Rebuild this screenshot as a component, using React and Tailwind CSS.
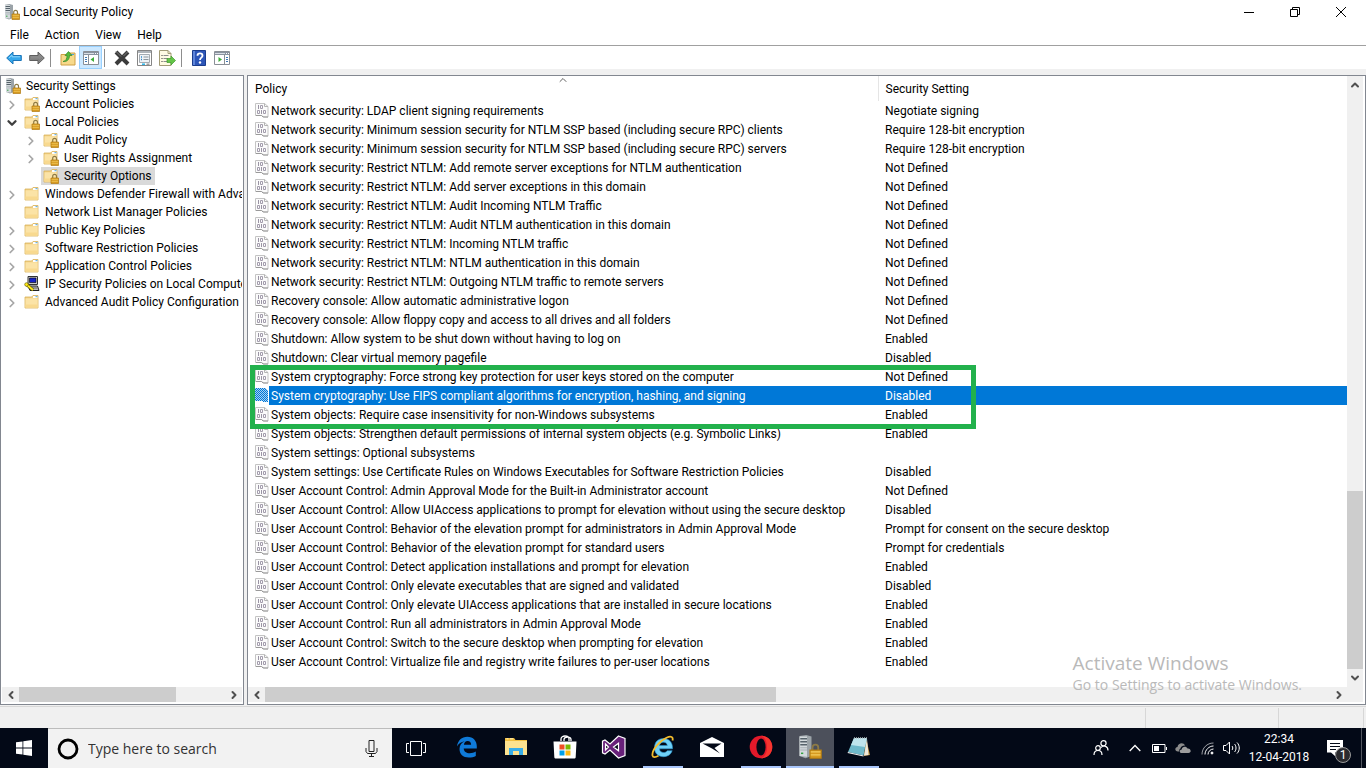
import React, { useState } from 'react'
import { ChevronDown, ChevronLeft, ChevronRight, ChevronUp } from 'lucide-react'
import clsx from 'clsx'

const menus = ['File', 'Action', 'View', 'Help']

const tree = [
  { label: 'Security Settings', level: 0, icon: 'server' },
  { label: 'Account Policies', level: 1, icon: 'locked', arrow: 'closed' },
  { label: 'Local Policies', level: 1, icon: 'locked', arrow: 'open' },
  { label: 'Audit Policy', level: 2, icon: 'locked', arrow: 'closed' },
  { label: 'User Rights Assignment', level: 2, icon: 'locked', arrow: 'closed' },
  { label: 'Security Options', level: 2, icon: 'locked' },
  { label: 'Windows Defender Firewall with Adva', level: 1, icon: 'folder', arrow: 'closed' },
  { label: 'Network List Manager Policies', level: 1, icon: 'folder' },
  { label: 'Public Key Policies', level: 1, icon: 'folder', arrow: 'closed' },
  { label: 'Software Restriction Policies', level: 1, icon: 'folder', arrow: 'closed' },
  { label: 'Application Control Policies', level: 1, icon: 'folder', arrow: 'closed' },
  { label: 'IP Security Policies on Local Compute', level: 1, icon: 'ipsec', arrow: 'closed' },
  { label: 'Advanced Audit Policy Configuration', level: 1, icon: 'folder', arrow: 'closed' },
]

const policies = [
  ['Network security: LDAP client signing requirements', 'Negotiate signing'],
  ['Network security: Minimum session security for NTLM SSP based (including secure RPC) clients', 'Require 128-bit encryption'],
  ['Network security: Minimum session security for NTLM SSP based (including secure RPC) servers', 'Require 128-bit encryption'],
  ['Network security: Restrict NTLM: Add remote server exceptions for NTLM authentication', 'Not Defined'],
  ['Network security: Restrict NTLM: Add server exceptions in this domain', 'Not Defined'],
  ['Network security: Restrict NTLM: Audit Incoming NTLM Traffic', 'Not Defined'],
  ['Network security: Restrict NTLM: Audit NTLM authentication in this domain', 'Not Defined'],
  ['Network security: Restrict NTLM: Incoming NTLM traffic', 'Not Defined'],
  ['Network security: Restrict NTLM: NTLM authentication in this domain', 'Not Defined'],
  ['Network security: Restrict NTLM: Outgoing NTLM traffic to remote servers', 'Not Defined'],
  ['Recovery console: Allow automatic administrative logon', 'Not Defined'],
  ['Recovery console: Allow floppy copy and access to all drives and all folders', 'Not Defined'],
  ['Shutdown: Allow system to be shut down without having to log on', 'Enabled'],
  ['Shutdown: Clear virtual memory pagefile', 'Disabled'],
  ['System cryptography: Force strong key protection for user keys stored on the computer', 'Not Defined'],
  ['System cryptography: Use FIPS compliant algorithms for encryption, hashing, and signing', 'Disabled'],
  ['System objects: Require case insensitivity for non-Windows subsystems', 'Enabled'],
  ['System objects: Strengthen default permissions of internal system objects (e.g. Symbolic Links)', 'Enabled'],
  ['System settings: Optional subsystems', ''],
  ['System settings: Use Certificate Rules on Windows Executables for Software Restriction Policies', 'Disabled'],
  ['User Account Control: Admin Approval Mode for the Built-in Administrator account', 'Not Defined'],
  ['User Account Control: Allow UIAccess applications to prompt for elevation without using the secure desktop', 'Disabled'],
  ['User Account Control: Behavior of the elevation prompt for administrators in Admin Approval Mode', 'Prompt for consent on the secure desktop'],
  ['User Account Control: Behavior of the elevation prompt for standard users', 'Prompt for credentials'],
  ['User Account Control: Detect application installations and prompt for elevation', 'Enabled'],
  ['User Account Control: Only elevate executables that are signed and validated', 'Disabled'],
  ['User Account Control: Only elevate UIAccess applications that are installed in secure locations', 'Enabled'],
  ['User Account Control: Run all administrators in Admin Approval Mode', 'Enabled'],
  ['User Account Control: Switch to the secure desktop when prompting for elevation', 'Enabled'],
  ['User Account Control: Virtualize file and registry write failures to per-user locations', 'Enabled'],
]

function Lock() {
  return (
    <g>
      <path d="M9.700 10.500V8.300a1.900 1.900 0 0 1 3.800 0v2.200" fill="none" stroke="#8d7a45" strokeWidth="1.200" />
      <path d="M8 10h7.500v5.500H8z" fill="#d79a20" stroke="#b07a12" strokeWidth=".7" />
      <path d="M8.500 11.300h6.500M8.500 13.300h6.500" stroke="#f3cb5e" strokeWidth=".8" />
    </g>
  )
}

function ServerIcon({ size = 16 }) {
  return (
    <svg width={size} height={size} viewBox="0 0 16 16">
      <path d="M1 .7 5.500 0 9 1v13l-4 1.500L1 14z" fill="#9ba3a8" />
      <path d="M1 1h5v13.500L1 14z" fill="#d3d9dc" />
      <path d="M1.500 2.500H6M1.500 4.500H6M1.500 6.500H6" stroke="#56626a" strokeWidth="1" />
      <path d="M1.500 8.500H6M1.500 10H6" stroke="#a8b0b5" strokeWidth=".7" />
      <path d="M2 12.200h1.500" stroke="#35a343" />
      <Lock />
    </svg>
  )
}

function FolderIcon({ locked }) {
  return (
    <svg width="16" height="16" viewBox="0 0 16 16">
      <path d="M1 3h6.500l1.500-1.500h5V14H1z" fill="#f0cf83" stroke="#d9b25c" strokeWidth=".8" />
      <path d="M9 2h4.500v2H9z" fill="#fff" />
      <path d="M11.500 2.700h2" stroke="#4aa3e0" />
      <path d="M1.500 4.300h12.200v9.300H1.500z" fill="#fbe3a6" />
      <path d="M1.500 10.500h12.200v3.100H1.500z" fill="#f8d98f" />
      {locked && <Lock />}
    </svg>
  )
}

function IpsecIcon() {
  return (
    <svg width="16" height="16" viewBox="0 0 16 16">
      <path d="M4 .5h9.500v8H4z" fill="#c9c9c9" stroke="#333" />
      <path d="M5.500 2h6.500v4.500H5.500z" fill="#1522c9" stroke="#000" strokeWidth=".6" />
      <path d="M4 10h9.500l1.500 4.500H6z" fill="#bdbdbd" stroke="#222" />
      <path d="M7 12h6.500" stroke="#666" />
      <path d="m2 8 7 6" stroke="#5f5600" strokeWidth="3" />
      <path d="m2 8 7 6" stroke="#ffeb1c" strokeWidth="1.800" />
      <circle cx="2.500" cy="8.500" r="1.800" fill="#ffeb1c" stroke="#5f5600" strokeWidth=".6" />
    </svg>
  )
}

function PolicyIcon({ selected }) {
  return (
    <svg width="14" height="15" viewBox="0 0 14 15" className="block">
      {selected ? (
        <>
          <defs>
            <pattern id="dither" width="2" height="2" patternUnits="userSpaceOnUse">
              <rect width="2" height="2" fill="#0078d7" />
              <rect width="1" height="1" fill="#a9d0f2" />
              <rect x="1" y="1" width="1" height="1" fill="#a9d0f2" />
            </pattern>
          </defs>
          <path d="M0 0h10l3 3v11H9l-3-1H0z" fill="url(#dither)" shapeRendering="crispEdges" />
        </>
      ) : (
        <>
          <path d="M.5.500h9l3.500 3v10.500H9L6.500 12.500H.5z" fill="#fbfbfb" stroke="#c4c4c4" />
          <path d="M9.500.500v3H13" fill="none" stroke="#b4b4b4" />
          <path d="M1 12.500h5.500L8 14h5" fill="none" stroke="#999" />
          <path d="M3.500 2v4M6.500 7v4" stroke="#9a94a4" />
          <path d="M5.500 2.500h2v3h-2zM2.500 7.500h2v3h-2zM8.500 7.500h2v3h-2z" fill="none" stroke="#a39dad" />
        </>
      )}
    </svg>
  )
}

function TreeIcon({ name }) {
  if (name === 'server') return <ServerIcon />
  if (name === 'ipsec') return <IpsecIcon />
  return <FolderIcon locked={name === 'locked'} />
}

function ArrowIcon({ forward }) {
  return (
    <svg width="16" height="14" viewBox="0 0 16 14" className={forward ? 'rotate-180' : ''}>
      <path
        d="M.7 7 7 1v3.500h8.300v5H7V13z"
        fill={forward ? '#8a8a8a' : '#35a7ea'}
        stroke={forward ? '#5e5e5e' : '#1b74b8'}
        strokeLinejoin="round"
      />
      <path d="M3 7 6 4.200v1.600h8" fill="none" stroke={forward ? '#7b7b7b' : '#8fd6fb'} />
    </svg>
  )
}

function PaneIcon({ flip }) {
  return (
    <svg width="16" height="14" viewBox="0 0 16 14">
      <path d="M.5.500h15v13H.5z" fill="#fff" stroke="#8a8f96" />
      <path d="M1 1h14v3H1z" fill="#8a93a0" />
      <path d="M1 2.500h10" stroke="#d9dee4" />
      <path d="M12 2.500h1M14 2.500h1" stroke="#fff" />
      <path d={flip ? 'M10.500 4v9' : 'M5.500 4v9'} stroke="#8a8f96" />
      <path d={flip ? 'M12 6.500h2M12 8.500h2M12 10.500h2' : 'M2 6.500h2M2 8.500h2M2 10.500h2'} stroke="#3f78b5" />
      <path d={flip ? 'M4.500 6v5L8 8.500z' : 'M11 6v5L7.500 8.500z'} fill="#3fae3a" />
    </svg>
  )
}

function FolderUpIcon() {
  return (
    <svg width="16" height="16" viewBox="0 0 16 16">
      <path d="M1 4.500h7l1-1.500h6v12H1z" fill="#f7d98b" stroke="#cfa044" />
      <path d="M11 4.500h3" stroke="#4aa3e0" />
      <path d="M3 11.500c3-.5 4-3 4-6H5L8.500 1.500 12 5.500H9.500c0 4-2.500 6.500-6.500 6z" fill="#55bb3c" stroke="#34862a" strokeWidth=".7" />
    </svg>
  )
}

function DeleteIcon() {
  return (
    <svg width="16" height="16" viewBox="0 0 16 16">
      <path d="m2 2 12 12M14 2 2 14" stroke="#3c3c3c" strokeWidth="4" />
      <path d="m2 1.500 5 5M13.500 2l-4 4" stroke="#7a7a7a" strokeWidth="1" />
    </svg>
  )
}

function PropertiesIcon() {
  return (
    <svg width="16" height="16" viewBox="0 0 16 16">
      <path d="M.5.500h14v15H.5z" fill="#fff" stroke="#858585" />
      <path d="M1 2h13" stroke="#aeb4ba" strokeWidth="2" />
      <path d="M2.500 4.500h10v8h-10z" fill="#eef3f7" stroke="#a4abb2" />
      <path d="M4 7h1M4 9.500h1" stroke="#2d87c9" strokeWidth="1.500" />
      <path d="M6.500 7h5M6.500 9.500h5" stroke="#8b949c" />
      <path d="M5 14.200h3" stroke="#2bb4e8" strokeWidth="1.500" />
      <path d="M9.500 14.200h3" stroke="#999" strokeWidth="1.500" />
    </svg>
  )
}

function ExportIcon() {
  return (
    <svg width="17" height="16" viewBox="0 0 17 16">
      <path d="M.5.500h8.500l3 3v12H.5z" fill="#fffbe3" stroke="#a39c77" />
      <path d="M9 .5v3h3" fill="none" stroke="#a39c77" />
      <path d="M2.500 5.500h1M2.500 8.500h1M2.500 11.500h1" stroke="#333" />
      <path d="M4.500 5.500h5M4.500 8.500h4M4.500 11.500h4" stroke="#8c8c8c" />
      <path d="M8 8.500h4V6l4.500 4.500L12 15v-2.500H8z" fill="#64c548" stroke="#3d9a2b" strokeWidth=".7" />
    </svg>
  )
}

function HelpIcon() {
  return (
    <svg width="14" height="16" viewBox="0 0 14 16">
      <path d="M.5.500h13v15H.5z" fill="#2d56b8" stroke="#1b3c8c" />
      <path d="M1 1h2v14H1z" fill="#5f86da" />
      <path d="M5.500 5.700c0-3 5-3 5 0 0 2-2.500 2-2.500 4.300" fill="none" stroke="#fff" strokeWidth="1.800" />
      <circle cx="8" cy="12.500" r="1.200" fill="#fff" />
    </svg>
  )
}

function ToolButton({ label, active, children }) {
  return (
    <button
      type="button"
      aria-label={label}
      className={clsx(
        'flex h-[23px] w-[23px] items-center justify-center border',
        active ? 'border-[#99d1ff] bg-[#cce8ff]' : 'border-transparent hover:bg-[#e5f3ff]',
      )}
    >
      {children}
    </button>
  )
}

function ToolSeparator() {
  return <div className="mr-[5px] ml-0.5 h-[18px] w-px bg-[#8d8d8d]" />
}

function ScrollButton({ label, icon: Icon, className }) {
  return (
    <button type="button" aria-label={label} className={clsx('flex shrink-0 items-center justify-center text-[#505050]', className)}>
      <Icon size={12} strokeWidth={4} />
    </button>
  )
}

function HorizontalScrollbar({ thumb }) {
  return (
    <div className="flex h-[15px] bg-[#f0f0f0]">
      <ScrollButton label="Scroll left" icon={ChevronLeft} className="w-[17px]" />
      <div className="flex-1">
        <div className={clsx('h-full bg-[#cdcdcd]', thumb)} />
      </div>
      <ScrollButton label="Scroll right" icon={ChevronRight} className="w-[17px]" />
    </div>
  )
}

function Tree() {
  const [selected, setSelected] = useState('Security Options')

  return (
    <nav className="flex w-[244px] shrink-0 flex-col border border-[#828790] bg-white px-px pt-px pb-0.5">
      <ul className="flex-1 overflow-hidden">
        {tree.map((node) => (
          <li
            key={node.label}
            className={clsx(
              'flex h-[18px] items-center',
              node.level === 0 && 'pl-px',
              node.level === 1 && 'pl-0.5',
              node.level === 2 && 'pl-[21px]',
            )}
          >
            {node.level > 0 && (
              <span className="mr-0.5 flex w-4 shrink-0 justify-center pt-0.5">
                {node.arrow === 'closed' && <ChevronRight size={14} strokeWidth={3} className="text-[#a6a6a6]" />}
                {node.arrow === 'open' && <ChevronDown size={14} strokeWidth={4} className="text-[#404040]" />}
              </span>
            )}
            <button
              type="button"
              onClick={() => setSelected(node.label)}
              className={clsx(
                'flex h-[18px] items-center gap-[5px] pr-1 pl-0.5 whitespace-nowrap',
                selected === node.label && 'bg-[#d9d9d9]',
              )}
            >
              <TreeIcon name={node.icon} />
              {node.label}
            </button>
          </li>
        ))}
      </ul>
      <HorizontalScrollbar thumb="w-[76%]" />
    </nav>
  )
}

function PolicyList() {
  const [selected, setSelected] = useState(15)

  return (
    <main className="flex min-w-0 flex-1 flex-col border border-[#828790] bg-white pr-0.5 pb-0.5">
      <div className="flex flex-1">
        <div className="relative min-w-0 flex-1">
          <table className="w-full table-fixed border-collapse text-left">
            <colgroup>
              <col className="w-[21px]" />
              <col className="w-[609px]" />
              <col />
            </colgroup>
            <thead>
              <tr className="h-[25px]">
                <th colSpan={2} className="relative border-r border-[#e5e5e5] p-0 pl-[7px] font-normal">
                  Policy
                  <span className="absolute inset-x-0 -top-0.5 flex justify-center text-[#606060]">
                    <ChevronUp size={12} strokeWidth={2} />
                  </span>
                </th>
                <th className="p-0 pl-[7px] font-normal">Security Setting</th>
              </tr>
            </thead>
            <tbody>
              {policies.map(([name, setting], i) => (
                <tr key={name} onClick={() => setSelected(i)} className="h-[19px] cursor-default">
                  <td className="p-0 pl-[7px]">
                    <PolicyIcon selected={selected === i} />
                  </td>
                  <td className={clsx('p-0 pl-0.5 whitespace-nowrap', selected === i && 'bg-[#0078d7] text-white')}>{name}</td>
                  <td className={clsx('p-0 pl-[7px] whitespace-nowrap', selected === i && 'bg-[#0078d7] text-white')}>{setting}</td>
                </tr>
              ))}
            </tbody>
          </table>
          {/* highlight round the cryptography rows */}
          <div className="pointer-events-none absolute top-[289px] left-0.5 h-16 w-[726px] border-[5px] border-[#22b14c]" />
        </div>
        <div className="flex w-4 flex-col bg-[#f0f0f0]">
          <ScrollButton label="Scroll up" icon={ChevronUp} className="h-[18px]" />
          <div className="flex flex-1 flex-col justify-end">
            <div className="h-[31%] bg-[#cdcdcd]" />
          </div>
          <ScrollButton label="Scroll down" icon={ChevronDown} className="h-[18px]" />
        </div>
      </div>
      <div className="bg-[#f0f0f0] pr-4">
        <HorizontalScrollbar thumb="w-[48%]" />
      </div>
    </main>
  )
}

function EdgeIcon() {
  return (
    <svg width="22" height="22" viewBox="0 0 22 22">
      <path
        d="M1 10.500C1.800 4.500 5.800.8 11.300.8c6 0 9.500 4.200 9.500 9.400v2.400H7.700c.2 3.200 2.800 4.700 6 4.700 2.300 0 4.300-.6 6.100-1.700v4.400c-2 1.100-4.300 1.600-7 1.600-5.800 0-9.300-3.400-9.300-8.500 0-3.600 2-6.500 5.200-7.900C5 5.900 2.600 7.600 1 10.500zm6.900-1.800h7.200c0-2.300-1.200-3.800-3.500-3.800-2 0-3.400 1.500-3.700 3.800z"
        fill="#0f7ad8"
      />
    </svg>
  )
}

function ExplorerIcon() {
  return (
    <svg width="22" height="20" viewBox="0 0 22 20">
      <path d="M0 1h9l1.500 2H22v15H0z" fill="#f2bf3f" />
      <path d="M1.500 1.800h2M5 1.800h3" stroke="#fff3c4" />
      <path d="M0 4h22v14H0z" fill="#fde28f" />
      <path d="M4 11h14v7h-4v-4H8v4H4z" fill="#38ade8" />
    </svg>
  )
}

function StoreIcon() {
  return (
    <svg width="24" height="24" viewBox="0 0 24 24">
      <path d="M8 6V4c0-4 8-4 8 0v2M11 6V4.500c0-3 7-3.500 7 0V6" fill="none" stroke="#fff" strokeWidth="1.300" />
      <path d="M.5 6.500h23l-.8 15.500c0 1-.7 1.500-1.700 1.500H3c-1 0-1.700-.5-1.700-1.500z" fill="#fff" />
      <path d="M6.500 9.500h5v5h-5z" fill="#f04e23" />
      <path d="M12.500 9.500h5v5h-5z" fill="#7db900" />
      <path d="M6.500 15.500h5v5h-5z" fill="#009fe8" />
      <path d="M12.500 15.500h5v5h-5z" fill="#fcb813" />
    </svg>
  )
}

function VisualStudioIcon() {
  return (
    <svg width="26" height="24" viewBox="0 0 26 24">
      <path
        d="M17.500 1 24 3.500v17L17.500 23 9 15l-5 4-2.500-1.200V6.200L4 5l5 4zM4.500 9v6l3-3zm13-.8L12.500 12l5 3.800z"
        fill="#68217a"
        fillRule="evenodd"
        stroke="#fff"
        strokeWidth="1.200"
      />
    </svg>
  )
}

function ExplorerBrowserIcon() {
  return (
    <svg width="24" height="24" viewBox="0 0 24 24">
      <path
        d="M12.500 3.500c5.500 0 9 4 9 9v1.300H8.500c.2 2.500 1.700 3.700 4.200 3.700 1.700 0 2.800-.7 3.500-1.800h5c-1.300 3.800-4.300 6-8.700 6-5.500 0-9-3.500-9-9s3.500-9.200 9-9.200zm-4 7h7.800c-.2-2-1.500-3.300-3.800-3.300s-3.700 1.300-4 3.300z"
        fill="#6fd0f7"
        stroke="#2a93d0"
        strokeWidth=".6"
      />
      <path d="M21.500 5.500C22.500 2 20 .8 16 2.500 9 5.500.5 15 1.500 20.500c.5 2.300 3 2 6 .3" fill="none" stroke="#f3bd2e" strokeWidth="1.800" />
    </svg>
  )
}

function MailIcon() {
  return (
    <svg width="24" height="20" viewBox="0 0 24 20">
      <path d="M0 6 12 0l12 6v14H0z" fill="#fff" />
      <path d="M2.500 6.500h19l-7 4.500 5.500 5.500-8-5z" fill="#030917" />
    </svg>
  )
}

function OperaIcon() {
  return (
    <svg width="24" height="24" viewBox="0 0 24 24">
      <ellipse cx="12" cy="12" rx="11.300" ry="11.300" fill="#e3192a" />
      <path d="M12 .7c15 0 15 22.600 0 22.600 8-2 8-20 0-22.600z" fill="#f7352f" />
      <ellipse cx="12" cy="12" rx="4.600" ry="8.600" fill="#030917" />
    </svg>
  )
}

function NotepadIcon() {
  return (
    <svg width="24" height="24" viewBox="0 0 24 24">
      <path d="m19 3 4 17-6 1z" fill="#c89d4c" />
      <path d="m20 4 1.500 16-4.500.5z" fill="#efe9dc" />
      <path d="M7 3h13l-3.500 17.500L1 17z" fill="#6fb9ca" />
      <path d="M7 3h13l-2 9-14-2z" fill="#bfe4ec" />
      <path d="m1 17 15.500 3.500v1L.5 18z" fill="#f3f3f3" />
      <path d="M7 3h13" stroke="#aab5b9" strokeWidth="1.500" strokeDasharray="1 1" />
    </svg>
  )
}

function TaskViewIcon() {
  return (
    <svg width="20" height="15" viewBox="0 0 20 15" fill="none" stroke="#fff">
      <path d="M4.500.500h11v14h-11zM3 2.500H.5v9H3M17 2.500h2.500v9H17" />
    </svg>
  )
}

const taskbarApps = [
  { label: 'Microsoft Edge', icon: EdgeIcon },
  { label: 'File Explorer', icon: ExplorerIcon },
  { label: 'Microsoft Store', icon: StoreIcon },
  { label: 'Visual Studio', icon: VisualStudioIcon },
  { label: 'Internet Explorer', icon: ExplorerBrowserIcon, running: true },
  { label: 'Mail', icon: MailIcon },
  { label: 'Opera', icon: OperaIcon, running: true },
  { label: 'Local Security Policy', icon: () => <ServerIcon size={24} />, active: true },
  { label: 'Notepad', icon: NotepadIcon, running: true },
]

function TrayButton({ label, children }) {
  return (
    <button type="button" aria-label={label} className="flex h-full w-6 items-center justify-center hover:bg-white/10">
      {children}
    </button>
  )
}

function Tray() {
  return (
    <div className="flex items-center">
      <button type="button" aria-label="People" className="mr-1.5 flex h-full w-8 items-center justify-center">
        <svg width="16" height="16" viewBox="0 0 16 16" fill="none" stroke="#fff" strokeWidth="1.200">
          <circle cx="10.500" cy="3.300" r="2.600" />
          <circle cx="5" cy="8" r="2.300" />
          <path d="M1 15c0-6 8-6 8 0M8 7.500c3-3 7-1 7 3" />
        </svg>
      </button>
      <TrayButton label="Show hidden icons">
        <svg width="12" height="8" viewBox="0 0 12 8" fill="none" stroke="#fff" strokeWidth="1.300">
          <path d="m.7 7 5.300-5.500L11.300 7" />
        </svg>
      </TrayButton>
      <TrayButton label="Battery">
        <svg width="15" height="9" viewBox="0 0 15 9">
          <path d="M.5.500h12.500v8H.5zM14.500 3v3" fill="none" stroke="#fff" />
          <path d="M2 2h5v5H2z" fill="#fff" />
        </svg>
      </TrayButton>
      <TrayButton label="OneDrive">
        <svg width="16" height="10" viewBox="0 0 16 10">
          <path d="M3 8.500C-.5 8.500-.5 4.500 2.500 4 3 0 8.500-1 10 2.500c-3 0-4.500 1.500-4.500 3C4.500 6 4 7 4.500 8.500z" fill="#8b8b8b" />
          <path d="M6.500 10C4 10 4.500 6.500 6.700 6.500 7 3 11.500 3 12.500 5.500c3.500-.5 4.500 4.500 1 4.500z" fill="#9d9d9d" />
        </svg>
      </TrayButton>
      <TrayButton label="Network">
        <svg width="13" height="13" viewBox="0 0 13 13" fill="none" stroke="#fff">
          <path d="M1 12.500C1 6 6 1 12.500 1" opacity=".6" />
          <path d="M4 12.500C4 8 8 4 12.500 4M7 12.500C7 9.500 9.500 7 12.500 7" />
          <circle cx="11" cy="11" r="1" fill="#fff" />
        </svg>
      </TrayButton>
      <TrayButton label="Volume">
        <svg width="17" height="14" viewBox="0 0 17 14" fill="none" stroke="#fff">
          <path d="M.5 4.500H3L6.500 1v12L3 9.500H.5zM9 5c1 1 1 3 0 4M11.500 3c2 2 2 6 0 8M14 1.500c3 3 3 8 0 11" />
        </svg>
      </TrayButton>
      <button type="button" className="h-full w-[72px] text-center leading-[18px] text-white">
        <div>22:34</div>
        <div className="whitespace-nowrap">12-04-2018</div>
      </button>
      <button type="button" aria-label="Notifications" className="flex h-full w-10 items-center justify-center">
        <span className="relative">
          <svg width="16" height="16" viewBox="0 0 16 16">
            <path d="M0 0h16v12.500H8V16l-4-3.500H0z" fill="#fff" />
            <path d="M3 3.500h10M3 6.500h10M3 9.500h6" stroke="#030917" />
          </svg>
          <span className="absolute top-[7px] left-2 flex size-4 items-center justify-center rounded-full border border-[#9a9a9a] bg-[#2b2b2f] text-[12px] text-white">
            1
          </span>
        </span>
      </button>
      <button type="button" aria-label="Show desktop" className="ml-1.5 h-full w-[5px] border-l border-[#52565f]" />
    </div>
  )
}

function Taskbar() {
  return (
    <footer className="flex h-10 bg-[#030917] text-white">
      <button type="button" aria-label="Start" className="flex w-12 items-center justify-center">
        <svg width="16" height="16" viewBox="0 0 16 16">
          <path d="M0 2.300 6.500 1.400v6.200H0zM7.300 1.300 16 0v7.600H7.300zM0 8.400h6.500v6.200L0 13.700zM7.300 8.400H16V16l-8.700-1.200z" fill="#fff" />
        </svg>
      </button>
      <div className="flex w-[344px] items-center border-t border-[#bcbcbc] bg-[#f2f2f2] pr-3.5 pl-2">
        <svg width="24" height="24" viewBox="0 0 24 24" className="shrink-0">
          <circle cx="12" cy="12" r="9" fill="none" stroke="#000" strokeWidth="2.800" />
        </svg>
        <input
          aria-label="Type here to search"
          placeholder="Type here to search"
          className="ml-2 min-w-0 flex-1 bg-transparent font-['Open_Sans',sans-serif] text-[14px] text-black outline-none placeholder:text-[#333]"
        />
        <button type="button" aria-label="Speak">
          <svg width="13" height="17" viewBox="0 0 13 17" fill="none" stroke="#222">
            <path d="M4 .5h5v11H4zM1 8v3.500l1.500 2h8l1.500-2V8M6.500 13.500v3M4 16.500h5" />
          </svg>
        </button>
      </div>
      <button type="button" aria-label="Task view" className="mr-[3px] flex w-12 items-center justify-center">
        <TaskViewIcon />
      </button>
      <div className="flex flex-1 gap-px">
        {taskbarApps.map(({ label, icon: Icon, running, active }) => (
          <button
            key={label}
            type="button"
            aria-label={label}
            className={clsx('flex w-12 flex-col items-center', active && 'bg-[#4c505b]')}
          >
            <span className="flex flex-1 items-center">
              <Icon />
            </span>
            <span className={clsx('h-0.5', active ? 'w-full bg-[#a9c6fb]' : 'w-10', running && 'bg-[#a9c6fb]')} />
          </button>
        ))}
      </div>
      <Tray />
    </footer>
  )
}

export default function App() {
  return (
    <div className="relative flex min-h-screen flex-col bg-[#f0f0f0] font-[Roboto,'Open_Sans',sans-serif] text-[12px] leading-[18px] text-black">
      <header className="bg-white">
        <div className="flex h-6 items-center pr-0.5">
          <div className="flex flex-1 items-center gap-[3px] pl-1">
            <ServerIcon />
            <h1>Local Security Policy</h1>
          </div>
          <button type="button" aria-label="Minimize" className="flex h-5 w-[46px] items-center justify-center">
            <svg width="10" height="10" viewBox="0 0 10 10" stroke="#000">
              <path d="M0 5.500h10" />
            </svg>
          </button>
          <button type="button" aria-label="Restore" className="flex h-5 w-[46px] items-center justify-center">
            <svg width="10" height="10" viewBox="0 0 10 10" fill="none" stroke="#000">
              <path d="M.5 2.500h7v7h-7zM2.500 2.500v-2h7v7h-2" />
            </svg>
          </button>
          <button type="button" aria-label="Close" className="flex h-5 w-[46px] items-center justify-center">
            <svg width="10" height="10" viewBox="0 0 10 10" stroke="#000">
              <path d="m0 0 10 10M10 0 0 10" />
            </svg>
          </button>
        </div>
        <nav className="flex h-[21px] items-center pl-0.5">
          {menus.map((menu) => (
            <button key={menu} type="button" className="px-2 hover:bg-[#e5f3ff]">
              {menu}
            </button>
          ))}
        </nav>
        <div className="flex h-6 items-center border-t border-[#a0a0a0] pl-0.5">
          <ToolButton label="Back">
            <ArrowIcon />
          </ToolButton>
          <ToolButton label="Forward">
            <ArrowIcon forward />
          </ToolButton>
          <ToolSeparator />
          <ToolButton label="Up one level">
            <FolderUpIcon />
          </ToolButton>
          <ToolButton label="Show console tree" active>
            <PaneIcon />
          </ToolButton>
          <ToolSeparator />
          <ToolButton label="Delete">
            <DeleteIcon />
          </ToolButton>
          <ToolButton label="Properties">
            <PropertiesIcon />
          </ToolButton>
          <ToolButton label="Export list">
            <ExportIcon />
          </ToolButton>
          <ToolSeparator />
          <ToolButton label="Help">
            <HelpIcon />
          </ToolButton>
          <ToolButton label="Show action pane">
            <PaneIcon flip />
          </ToolButton>
        </div>
      </header>

      <div className="flex flex-1 gap-[3px] pt-1.5">
        <Tree />
        <PolicyList />
      </div>

      <div className="mt-px flex h-[22px] justify-end border-t border-[#d7d7d7] pt-px">
        <div className="w-[133px] border-l border-[#d7d7d7]" />
        <div className="w-[85px] border-l border-[#d7d7d7]" />
        <div className="w-[3px] border-l border-[#d7d7d7]" />
      </div>

      <Taskbar />

      <div className="pointer-events-none absolute right-16 bottom-[73px] font-['Open_Sans',sans-serif] text-[#b9b9b9]">
        <p className="text-[19px] leading-6">Activate Windows</p>
        <p className="text-[14px] leading-5">Go to Settings to activate Windows.</p>
      </div>
    </div>
  )
}
